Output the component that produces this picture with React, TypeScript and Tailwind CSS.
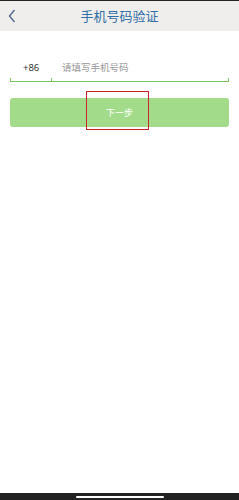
import React from 'react';

export default function App() {
  return (
    <div
      className="relative flex h-[500px] w-[239px] flex-col bg-white"
      style={{ fontFamily: '"Noto Sans", "Noto Sans CJK SC", sans-serif' }}
    >
      <div className="h-[1px] bg-[#222]" />
      <div className="relative flex h-[30px] items-center justify-center bg-[#efeeec]">
        <svg className="absolute left-[8px] top-[8px]" width="8" height="14" viewBox="0 0 8 14">
          <path d="M6.5 1 L1.5 7 L6.5 13" fill="none" stroke="#4a6a8a" strokeWidth="1.4" />
        </svg>
        <span className="text-[13px] leading-none text-[#2f6ea6]">手机号码验证</span>
      </div>

      <div className="mx-[10px] mt-[26px]">
        <div className="flex h-[23px] items-center text-[9.5px]">
          <span className="w-[41px] pl-[13px] text-[#333]">+86</span>
          <span className="pl-[11px] text-[#999]">请填写手机号码</span>
        </div>
        <div className="relative h-[2px] border-b border-[#7cc45e]">
          <span className="absolute bottom-[-1px] left-0 h-[4px] w-[1px] bg-[#7cc45e]" />
          <span className="absolute bottom-[-1px] left-[41px] h-[4px] w-[1px] bg-[#7cc45e]" />
          <span className="absolute bottom-[-1px] right-0 h-[4px] w-[1px] bg-[#7cc45e]" />
        </div>
      </div>

      <div className="relative mx-[10px] mt-[16px] flex h-[29px] items-center justify-center rounded-[3px] bg-[#a2dc8b]">
        <span className="text-[9px] text-white">下一步</span>
        <div className="absolute left-[76px] top-[-7px] h-[39px] w-[63px] border border-[#c8242a]" />
      </div>

      <div className="mt-auto flex h-[7px] items-start justify-center bg-[#222]">
        <div className="mt-[3px] h-[2px] w-[88px] rounded-full bg-white" />
      </div>
    </div>
  );
}
